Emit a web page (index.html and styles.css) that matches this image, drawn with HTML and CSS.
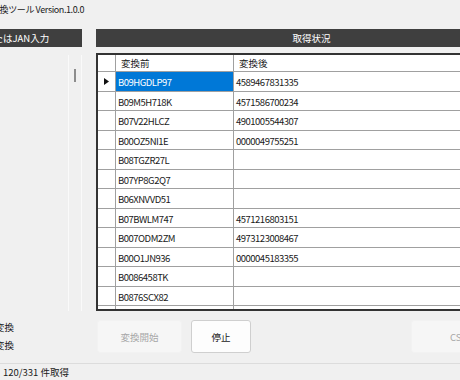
FILE: index.html
```html
<!DOCTYPE html>
<html lang="ja">
<head>
    <meta charset="UTF-8">
    <title>変換ツール Version.1.0.0</title>
    <link rel="stylesheet" href="styles.css">
</head>
<body>
    <div class="title-bar">変換ツール Version.1.0.0</div>
    <div class="main">
        <div class="left-col">
            <div class="panel-header input-header">またはJAN入力</div>
            <div class="input-box">
                <div class="input-area"></div>
                <div class="scrollbar"><div class="thumb"></div></div>
            </div>
            <div class="options">
                <div class="option">変換</div>
                <div class="option">変換</div>
            </div>
        </div>
        <div class="right-col">
            <div class="panel-header">取得状況</div>
            <div class="grid">
                <div class="cell head"></div>
                <div class="cell head">変換前</div>
                <div class="cell head">変換後</div>

                <div class="cell row-head"><svg width="5" height="7" viewBox="0 0 5 7"><polygon points="0,0 5,3.5 0,7" fill="#111"/></svg></div>
                <div class="cell selected">B09HGDLP97</div>
                <div class="cell">4589467831335</div>

                <div class="cell row-head"></div>
                <div class="cell">B09M5H718K</div>
                <div class="cell">4571586700234</div>

                <div class="cell row-head"></div>
                <div class="cell">B07V22HLCZ</div>
                <div class="cell">4901005544307</div>

                <div class="cell row-head"></div>
                <div class="cell">B00OZ5NI1E</div>
                <div class="cell">0000049755251</div>

                <div class="cell row-head"></div>
                <div class="cell">B08TGZR27L</div>
                <div class="cell"></div>

                <div class="cell row-head"></div>
                <div class="cell">B07YP8G2Q7</div>
                <div class="cell"></div>

                <div class="cell row-head"></div>
                <div class="cell">B06XNVVD51</div>
                <div class="cell"></div>

                <div class="cell row-head"></div>
                <div class="cell">B07BWLM747</div>
                <div class="cell">4571216803151</div>

                <div class="cell row-head"></div>
                <div class="cell">B007ODM2ZM</div>
                <div class="cell">4973123008467</div>

                <div class="cell row-head"></div>
                <div class="cell">B00O1JN936</div>
                <div class="cell">0000045183355</div>

                <div class="cell row-head"></div>
                <div class="cell">B0086458TK</div>
                <div class="cell"></div>

                <div class="cell row-head"></div>
                <div class="cell">B0876SCX82</div>
                <div class="cell"></div>

                <div class="cell row-head"></div>
                <div class="cell"></div>
                <div class="cell"></div>
            </div>
            <div class="actions">
                <button class="btn" disabled>変換開始</button>
                <button class="btn btn-stop">停止</button>
                <button class="btn btn-csv" disabled>CSV出力</button>
            </div>
        </div>
    </div>
    <div class="status-bar">120/331 件取得</div>
</body>
</html>
```

FILE: styles.css
```css
* {
    box-sizing: border-box;
}
body {
    margin: 0;
    width: 460px;
    height: 380px;
    overflow: hidden;
    background-color: #f0f0f0;
    font-family: "Noto Sans CJK JP", sans-serif;
    font-size: 9.5px;
    color: #1a1a1a;
}
.title-bar {
    height: 22px;
    line-height: 20px;
    font-size: 9px;
    letter-spacing: -0.4px;
    text-indent: -9px;
    white-space: nowrap;
}
.main {
    display: flex;
    gap: 14px;
    margin-top: 7px;
}
.left-col {
    width: 82px;
    flex: none;
}
.right-col {
    width: 431px;
    flex: none;
}
.panel-header {
    height: 18px;
    line-height: 18px;
    background-color: #3f3f3f;
    color: #ffffff;
    white-space: nowrap;
    overflow: hidden;
}
.input-header {
    text-indent: -16px;
}
.right-col .panel-header {
    text-align: center;
}
.input-box {
    display: flex;
    height: 256px;
    margin-top: 8px;
}
.input-area {
    flex: 1;
}
.scrollbar {
    width: 14px;
    border-left: 1px solid #fafafa;
    border-right: 1px solid #fafafa;
    padding: 14px 0 0 5px;
}
.thumb {
    width: 2px;
    height: 13px;
    background-color: #8c8c8c;
}
.options {
    margin-top: 7px;
}
.option {
    height: 18px;
    line-height: 18px;
    text-indent: -5px;
    white-space: nowrap;
}
.grid {
    display: grid;
    grid-template-columns: 18px 118px 1fr;
    grid-template-rows: 17px;
    grid-auto-rows: 19.5px;
    height: 258px;
    margin-top: 6px;
    border: 2px solid #333333;
    background-color: #ffffff;
    overflow: hidden;
}
.cell {
    border-right: 1px solid #a0a0a0;
    border-bottom: 1px solid #a0a0a0;
    padding: 1px 0 0 2px;
    line-height: 18px;
    letter-spacing: -0.5px;
    white-space: nowrap;
    overflow: hidden;
}
.cell.head {
    padding: 0 0 0 5px;
    line-height: 16px;
    letter-spacing: 0;
}
.row-head {
    display: flex;
    align-items: center;
    justify-content: center;
    padding: 0;
}
.selected {
    background-color: #0078d7;
    color: #ffffff;
}
.actions {
    display: flex;
    gap: 9px;
    margin-top: 9px;
    padding-left: 1px;
}
.btn {
    height: 33px;
    width: 85px;
    font-family: inherit;
    font-size: 9.5px;
    background-color: #f6f6f6;
    border: 1px solid #f2f2f2;
    border-radius: 3px;
    color: #a6a6a6;
}
.btn-stop {
    width: 60px;
    background-color: #fdfdfd;
    border-color: #cfcfcf;
    color: #1a1a1a;
}
.btn-csv {
    width: 114px;
    margin-left: auto;
    margin-right: 2px;
}
.status-bar {
    margin-top: 9px;
    height: 18px;
    border-top: 1px solid #dcdcdc;
    padding-left: 3px;
    line-height: 16px;
}
```
